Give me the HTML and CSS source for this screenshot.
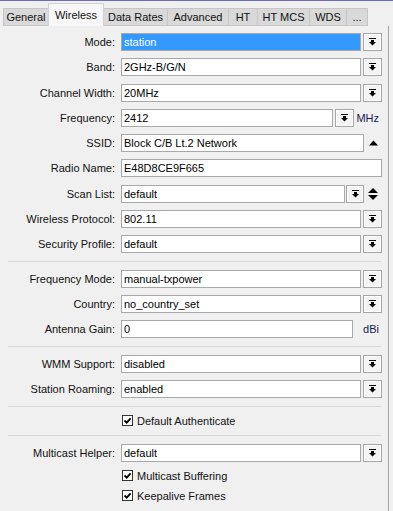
FILE: index.html
```html
<!DOCTYPE html>
<html lang="en">
<head>
    <meta charset="UTF-8">
    <title>Wireless</title>
    <link rel="stylesheet" href="styles.css">
</head>
<body>
    <div class="topline"></div>
    <div class="tabs">
        <div class="tab tab-general">General</div>
        <div class="tab tab-wireless active">Wireless</div>
        <div class="tab tab-rates">Data Rates</div>
        <div class="tab tab-advanced">Advanced</div>
        <div class="tab tab-ht">HT</div>
        <div class="tab tab-mcs">HT MCS</div>
        <div class="tab tab-wds">WDS</div>
        <div class="tab tab-more">...</div>
    </div>

    <div class="panel">
        <div class="group tall">
            <div class="row">
                <span class="label">Mode:</span>
                <div class="ctl">
                    <div class="field selected">station</div>
                    <div class="btn"><svg width="8" height="8" viewBox="0 0 8 8"><rect x="0" y="0" width="7" height="1"/><rect x="2" y="2" width="3" height="2"/><polygon points="0,4 7,4 3.5,7.5"/></svg></div>
                </div>
            </div>
            <div class="row">
                <span class="label">Band:</span>
                <div class="ctl">
                    <div class="field">2GHz-B/G/N</div>
                    <div class="btn"><svg width="8" height="8" viewBox="0 0 8 8"><rect x="0" y="0" width="7" height="1"/><rect x="2" y="2" width="3" height="2"/><polygon points="0,4 7,4 3.5,7.5"/></svg></div>
                </div>
            </div>
            <div class="row">
                <span class="label">Channel Width:</span>
                <div class="ctl">
                    <div class="field">20MHz</div>
                    <div class="btn"><svg width="8" height="8" viewBox="0 0 8 8"><rect x="0" y="0" width="7" height="1"/><rect x="2" y="2" width="3" height="2"/><polygon points="0,4 7,4 3.5,7.5"/></svg></div>
                </div>
            </div>
            <div class="row">
                <span class="label">Frequency:</span>
                <div class="ctl">
                    <div class="field">2412</div>
                    <div class="btn"><svg width="8" height="8" viewBox="0 0 8 8"><rect x="0" y="0" width="7" height="1"/><rect x="2" y="2" width="3" height="2"/><polygon points="0,4 7,4 3.5,7.5"/></svg></div>
                    <span class="unit">MHz</span>
                </div>
            </div>
            <div class="row">
                <span class="label">SSID:</span>
                <div class="ctl">
                    <div class="field">Block C/B Lt.2 Network</div>
                    <span class="side"><svg width="9" height="6" viewBox="0 0 9 6"><polygon points="0,5.5 9,5.5 4.5,0.5"/></svg></span>
                </div>
            </div>
            <div class="row">
                <span class="label">Radio Name:</span>
                <div class="ctl">
                    <div class="field">E48D8CE9F665</div>
                </div>
            </div>
            <div class="row">
                <span class="label">Scan List:</span>
                <div class="ctl">
                    <div class="field">default</div>
                    <div class="btn narrow"><svg width="8" height="8" viewBox="0 0 8 8"><rect x="0" y="0" width="7" height="1"/><rect x="2" y="2" width="3" height="2"/><polygon points="0,4 7,4 3.5,7.5"/></svg></div>
                    <span class="side"><svg width="10" height="14" viewBox="0 0 10 14"><polygon points="0,6 10,6 5,1"/><polygon points="0,8 10,8 5,13"/></svg></span>
                </div>
            </div>
            <div class="row">
                <span class="label">Wireless Protocol:</span>
                <div class="ctl">
                    <div class="field">802.11</div>
                    <div class="btn"><svg width="8" height="8" viewBox="0 0 8 8"><rect x="0" y="0" width="7" height="1"/><rect x="2" y="2" width="3" height="2"/><polygon points="0,4 7,4 3.5,7.5"/></svg></div>
                </div>
            </div>
            <div class="row">
                <span class="label">Security Profile:</span>
                <div class="ctl">
                    <div class="field">default</div>
                    <div class="btn"><svg width="8" height="8" viewBox="0 0 8 8"><rect x="0" y="0" width="7" height="1"/><rect x="2" y="2" width="3" height="2"/><polygon points="0,4 7,4 3.5,7.5"/></svg></div>
                </div>
            </div>
        </div>

        <div class="sep"></div>

        <div class="group">
            <div class="row">
                <span class="label">Frequency Mode:</span>
                <div class="ctl">
                    <div class="field">manual-txpower</div>
                    <div class="btn"><svg width="8" height="8" viewBox="0 0 8 8"><rect x="0" y="0" width="7" height="1"/><rect x="2" y="2" width="3" height="2"/><polygon points="0,4 7,4 3.5,7.5"/></svg></div>
                </div>
            </div>
            <div class="row">
                <span class="label">Country:</span>
                <div class="ctl">
                    <div class="field">no_country_set</div>
                    <div class="btn"><svg width="8" height="8" viewBox="0 0 8 8"><rect x="0" y="0" width="7" height="1"/><rect x="2" y="2" width="3" height="2"/><polygon points="0,4 7,4 3.5,7.5"/></svg></div>
                </div>
            </div>
            <div class="row">
                <span class="label">Antenna Gain:</span>
                <div class="ctl">
                    <div class="field">0</div>
                    <span class="unit">dBi</span>
                </div>
            </div>
        </div>

        <div class="sep"></div>

        <div class="group">
            <div class="row">
                <span class="label">WMM Support:</span>
                <div class="ctl">
                    <div class="field">disabled</div>
                    <div class="btn"><svg width="8" height="8" viewBox="0 0 8 8"><rect x="0" y="0" width="7" height="1"/><rect x="2" y="2" width="3" height="2"/><polygon points="0,4 7,4 3.5,7.5"/></svg></div>
                </div>
            </div>
            <div class="row">
                <span class="label">Station Roaming:</span>
                <div class="ctl">
                    <div class="field">enabled</div>
                    <div class="btn"><svg width="8" height="8" viewBox="0 0 8 8"><rect x="0" y="0" width="7" height="1"/><rect x="2" y="2" width="3" height="2"/><polygon points="0,4 7,4 3.5,7.5"/></svg></div>
                </div>
            </div>
        </div>

        <div class="sep"></div>

        <div class="check-row single">
            <span class="box"><svg width="9" height="9" viewBox="0 0 9 9"><path d="M1.5 4.5 L3.7 6.7 L7.6 2.3" fill="none" stroke="#000" stroke-width="1.8"/></svg></span>
            Default Authenticate
        </div>

        <div class="sep"></div>

        <div class="group">
            <div class="row">
                <span class="label">Multicast Helper:</span>
                <div class="ctl">
                    <div class="field">default</div>
                    <div class="btn"><svg width="8" height="8" viewBox="0 0 8 8"><rect x="0" y="0" width="7" height="1"/><rect x="2" y="2" width="3" height="2"/><polygon points="0,4 7,4 3.5,7.5"/></svg></div>
                </div>
            </div>
            <div class="check-row">
                <span class="box"><svg width="9" height="9" viewBox="0 0 9 9"><path d="M1.5 4.5 L3.7 6.7 L7.6 2.3" fill="none" stroke="#000" stroke-width="1.8"/></svg></span>
                Multicast Buffering
            </div>
            <div class="check-row">
                <span class="box"><svg width="9" height="9" viewBox="0 0 9 9"><path d="M1.5 4.5 L3.7 6.7 L7.6 2.3" fill="none" stroke="#000" stroke-width="1.8"/></svg></span>
                Keepalive Frames
            </div>
        </div>
    </div>
</body>
</html>
```

FILE: styles.css
```css
body {
    margin: 0;
    width: 393px;
    height: 511px;
    overflow: hidden;
    background-color: #f0f0f0;
    font-family: "Liberation Sans", Arial, sans-serif;
    font-size: 11px;
    color: #111;
}

.topline {
    height: 1px;
    background-color: #6c6cba;
}

/* tab strip */
.tabs {
    display: flex;
    align-items: flex-end;
    height: 25px;
    padding-left: 3px;
}
.tab {
    height: 18px;
    display: flex;
    align-items: center;
    justify-content: center;
    white-space: nowrap;
    background-color: #d9d9d9;
    border: 1px solid #c6c6c6;
    box-sizing: border-box;
    margin-left: -1px;
}
.tab:first-child {
    margin-left: 0;
}
.tab.active {
    height: 23px;
    background-color: #f7f7f7;
    border-color: #d2d2d2;
    border-bottom: none;
    position: relative;
    z-index: 1;
}
.tab-general { width: 46px; }
.tab-wireless { width: 56px; }
.tab-rates { width: 65px; }
.tab-advanced { width: 62px; }
.tab-ht { width: 30px; }
.tab-mcs { width: 53px; }
.tab-wds { width: 38px; }
.tab-more { width: 22px; }

/* main panel */
.panel {
    width: 389px;
    height: 485px;
    box-sizing: border-box;
    border-right: 1px solid #a3a3a3;
    padding-top: 3.5px;
}
.row {
    display: flex;
    align-items: center;
    height: 25px;
}
.group.tall .row {
    height: 25.25px;
}
.label {
    flex: none;
    width: 121px;
    padding-right: 6px;
    box-sizing: border-box;
    text-align: right;
    white-space: nowrap;
}
.ctl {
    width: 261px;
    display: flex;
    align-items: center;
}
.field {
    flex: 1;
    height: 18px;
    box-sizing: border-box;
    border: 1px solid #a8a8a8;
    background-color: #fff;
    padding-left: 2px;
    line-height: 16px;
    white-space: nowrap;
    overflow: hidden;
    color: #000;
}
.field.selected {
    background-color: #3399ff;
    color: #fff;
}
.btn {
    flex: none;
    width: 19px;
    height: 18px;
    margin-left: 2px;
    box-sizing: border-box;
    border: 1px solid #a5a5a5;
    background-color: #f3f3f3;
    box-shadow: inset 0 0 0 1px #fff;
    display: flex;
    align-items: center;
    justify-content: center;
}
.btn.narrow {
    width: 18px;
    margin-left: 1px;
}
.btn svg {
    fill: #000;
    margin-left: 1px;
}
.side {
    flex: none;
    width: 18px;
    display: flex;
    align-items: center;
    justify-content: center;
}
.side svg {
    fill: #000;
}
.unit {
    flex: none;
    width: 28px;
    text-align: right;
    padding-right: 3px;
    box-sizing: border-box;
    color: #1a1a50;
}
.ctl .field + .unit {
    width: 29px;
}

.sep {
    margin: 4.5px 0 4.5px 8px;
    width: 373px;
    border-top: 1px solid #d9d9d9;
}

/* checkboxes */
.check-row {
    display: flex;
    align-items: center;
    height: 20px;
    padding-left: 122px;
}
.check-row.single {
    margin: -1px 0 1px;
}
.box {
    width: 11px;
    height: 11px;
    box-sizing: border-box;
    border: 1px solid #333;
    background-color: #fff;
    margin-right: 4px;
    display: flex;
    align-items: center;
    justify-content: center;
}
```
